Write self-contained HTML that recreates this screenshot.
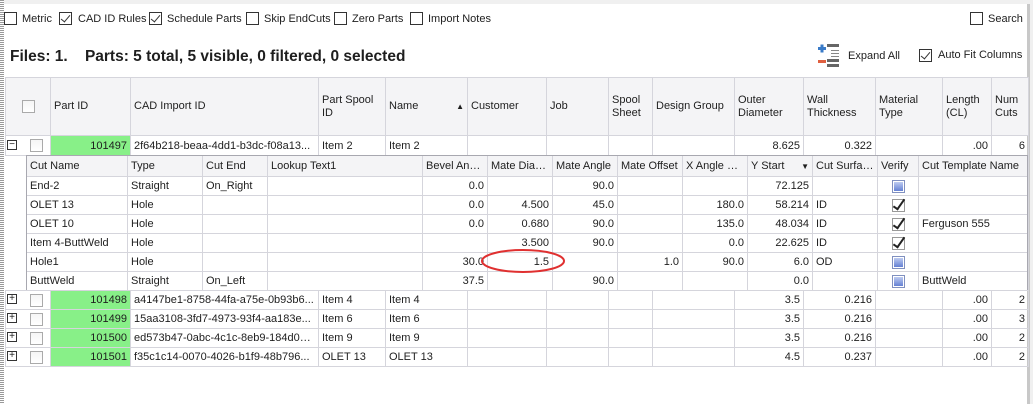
<!DOCTYPE html>
<html><head><meta charset="utf-8"><style>
*{box-sizing:border-box;margin:0;padding:0}
body{width:1033px;height:404px;background:#fff;font-family:"Liberation Sans",sans-serif;font-size:11px;color:#1e1e1e;position:relative;overflow:hidden}
.topband{position:absolute;left:0;top:0;width:1033px;height:4px;background:#f0f0f0}
.ldots{position:absolute;left:0;top:0;width:4px;height:404px;background:repeating-linear-gradient(#999 0 1px,#fff 1px 2px)}
.rline{position:absolute;left:1027px;top:4px;width:3px;height:400px;background:#c8c8c8}
.rgray{position:absolute;left:1030px;top:0;width:3px;height:404px;background:#f0f0f0}
.cb{position:absolute;width:13px;height:13px;border:1px solid #333;background:#fff}
.lbl{position:absolute;font-size:11px;white-space:nowrap}
.ck::after{content:"";position:absolute;left:3px;top:0px;width:4px;height:8px;border:solid #333;border-width:0 1.5px 1.5px 0;transform:rotate(40deg)}
table{position:absolute;border-collapse:collapse;table-layout:fixed}
td{border:1px solid #d5d5dc;padding:0 3px;white-space:nowrap;overflow:hidden;text-overflow:ellipsis;height:19px}
.r{text-align:right}
.hd td{background:#f4f4f6;vertical-align:middle;line-height:13px}
.g{background:#88f088}
.sq{display:inline-block;width:13px;height:13px;border:1px solid #aaa;background:linear-gradient(#f5f5f5,#fff);vertical-align:middle}
.pm{position:absolute;width:10px;height:10px;border:1px solid #333;background:#fff;font-size:10px;line-height:8px;text-align:center}
.vb{display:inline-block;width:13px;height:13px;border:1px solid #8090c0;background:linear-gradient(#c8d4f4,#5a78d0);box-shadow:inset 0 0 0 1px #fff;vertical-align:middle}
.vc{display:inline-block;width:13px;height:13px;border:1px solid #999;background:#fff;position:relative;vertical-align:middle}
.vc::after{content:"";position:absolute;left:3px;top:-3px;width:4px;height:11px;border:solid #222;border-width:0 2px 2px 0;transform:rotate(35deg)}
</style></head><body>
<div class="topband"></div><div class="ldots"></div><div class="rline"></div><div class="rgray"></div>

<div class="cb" style="left:4px;top:12px"></div><div class="lbl" style="left:22px;top:13px">Metric</div>
<div class="cb ck" style="left:59px;top:12px"></div><div class="lbl" style="left:78px;top:13px">CAD ID Rules</div>
<div class="cb ck" style="left:149px;top:12px"></div><div class="lbl" style="left:167px;top:13px">Schedule Parts</div>
<div class="cb" style="left:246px;top:12px"></div><div class="lbl" style="left:264px;top:13px">Skip EndCuts</div>
<div class="cb" style="left:334px;top:12px"></div><div class="lbl" style="left:352px;top:13px">Zero Parts</div>
<div class="cb" style="left:410px;top:12px"></div><div class="lbl" style="left:428px;top:13px">Import Notes</div>
<div class="cb" style="left:970px;top:12px"></div><div class="lbl" style="left:988px;top:13px">Search</div>

<div class="lbl" style="left:10px;top:48px;font-size:15.5px;font-weight:bold">Files: 1.&nbsp;&nbsp;&nbsp; Parts: 5 total, 5 visible, 0 filtered, 0 selected</div>

<svg style="position:absolute;left:816px;top:43px" width="28" height="25"><rect x="2" y="4" width="8" height="3" fill="#3a7bc8"/><rect x="4.5" y="1.5" width="3" height="8" fill="#3a7bc8"/><rect x="2" y="17" width="8" height="3" fill="#e06040"/><rect x="11" y="1" width="12" height="3" fill="#666"/><rect x="15" y="7" width="8" height="1" fill="#888"/><rect x="15" y="10" width="8" height="1" fill="#888"/><rect x="15" y="13" width="8" height="1" fill="#888"/><rect x="11" y="16" width="12" height="3" fill="#666"/><rect x="11" y="21" width="12" height="3" fill="#666"/></svg>
<div class="lbl" style="left:848px;top:50px">Expand All</div>
<div class="cb ck" style="left:919px;top:49px"></div><div class="lbl" style="left:938px;top:49px">Auto Fit Columns</div>

<table style="left:5px;top:77px;width:1023px">
<colgroup><col style="width:45px"><col style="width:80px"><col style="width:188px"><col style="width:67px"><col style="width:82px"><col style="width:79px"><col style="width:62px"><col style="width:44px"><col style="width:82px"><col style="width:69px"><col style="width:72px"><col style="width:67px"><col style="width:49px"><col style="width:37px"></colgroup>
<tr class="hd" style="height:58px"><td style="text-align:center"><span class="sq"></span></td><td>Part ID</td><td>CAD Import ID</td><td style="white-space:normal">Part Spool ID</td><td>Name <span style="float:right;font-size:8px">▲</span></td><td>Customer</td><td>Job</td><td style="white-space:normal">Spool Sheet</td><td>Design Group</td><td style="white-space:normal">Outer Diameter</td><td style="white-space:normal">Wall Thickness</td><td style="white-space:normal">Material Type</td><td style="white-space:normal">Length (CL)</td><td style="white-space:normal">Num Cuts</td></tr>
<tr style="height:20px"><td style="padding-left:24px"><span class="sq"></span></td><td class="r g">101497</td><td>2f64b218-beaa-4dd1-b3dc-f08a13...</td><td>Item 2</td><td>Item 2</td><td></td><td></td><td></td><td></td><td class="r">8.625</td><td class="r">0.322</td><td></td><td class="r">.00</td><td class="r">6</td></tr>
</table>
<div class="pm" style="left:7px;top:140px">−</div>

<table style="left:26px;top:155px;width:1002px">
<colgroup><col style="width:101px"><col style="width:75px"><col style="width:65px"><col style="width:155px"><col style="width:65px"><col style="width:65px"><col style="width:65px"><col style="width:65px"><col style="width:65px"><col style="width:65px"><col style="width:65px"><col style="width:41px"><col style="width:110px"></colgroup>
<tr class="hd" style="height:21px"><td>Cut Name</td><td>Type</td><td>Cut End</td><td>Lookup Text1</td><td>Bevel Angle</td><td>Mate Diameter</td><td>Mate Angle</td><td>Mate Offset</td><td>X Angle Start</td><td>Y Start <span style="float:right;font-size:8px">▼</span></td><td>Cut Surface</td><td>Verify</td><td>Cut Template Name</td></tr>
<tr><td>End-2</td><td>Straight</td><td>On_Right</td><td></td><td class="r">0.0</td><td></td><td class="r">90.0</td><td></td><td></td><td class="r">72.125</td><td></td><td style="text-align:center"><span class="vb"></span></td><td></td></tr>
<tr><td>OLET 13</td><td>Hole</td><td></td><td></td><td class="r">0.0</td><td class="r">4.500</td><td class="r">45.0</td><td></td><td class="r">180.0</td><td class="r">58.214</td><td>ID</td><td style="text-align:center"><span class="vc"></span></td><td></td></tr>
<tr><td>OLET 10</td><td>Hole</td><td></td><td></td><td class="r">0.0</td><td class="r">0.680</td><td class="r">90.0</td><td></td><td class="r">135.0</td><td class="r">48.034</td><td>ID</td><td style="text-align:center"><span class="vc"></span></td><td>Ferguson 555</td></tr>
<tr><td>Item 4-ButtWeld</td><td>Hole</td><td></td><td></td><td></td><td class="r">3.500</td><td class="r">90.0</td><td></td><td class="r">0.0</td><td class="r">22.625</td><td>ID</td><td style="text-align:center"><span class="vc"></span></td><td></td></tr>
<tr><td>Hole1</td><td>Hole</td><td></td><td></td><td class="r">30.0</td><td class="r">1.5</td><td></td><td class="r">1.0</td><td class="r">90.0</td><td class="r">6.0</td><td>OD</td><td style="text-align:center"><span class="vb"></span></td><td></td></tr>
<tr><td>ButtWeld</td><td>Straight</td><td>On_Left</td><td></td><td class="r">37.5</td><td></td><td class="r">90.0</td><td></td><td></td><td class="r">0.0</td><td></td><td style="text-align:center"><span class="vb"></span></td><td>ButtWeld</td></tr>
</table>
<div style="position:absolute;left:26px;top:155px;width:1002px;height:136px;border:1px solid #a8a8b0;pointer-events:none"></div>

<table style="left:5px;top:290px;width:1023px">
<colgroup><col style="width:45px"><col style="width:80px"><col style="width:188px"><col style="width:67px"><col style="width:82px"><col style="width:79px"><col style="width:62px"><col style="width:44px"><col style="width:82px"><col style="width:69px"><col style="width:72px"><col style="width:67px"><col style="width:49px"><col style="width:37px"></colgroup>
<tr><td style="padding-left:24px"><span class="sq"></span></td><td class="r g">101498</td><td>a4147be1-8758-44fa-a75e-0b93b6...</td><td>Item 4</td><td>Item 4</td><td></td><td></td><td></td><td></td><td class="r">3.5</td><td class="r">0.216</td><td></td><td class="r">.00</td><td class="r">2</td></tr>
<tr><td style="padding-left:24px"><span class="sq"></span></td><td class="r g">101499</td><td>15aa3108-3fd7-4973-93f4-aa183e...</td><td>Item 6</td><td>Item 6</td><td></td><td></td><td></td><td></td><td class="r">3.5</td><td class="r">0.216</td><td></td><td class="r">.00</td><td class="r">3</td></tr>
<tr><td style="padding-left:24px"><span class="sq"></span></td><td class="r g">101500</td><td>ed573b47-0abc-4c1c-8eb9-184d0b...</td><td>Item 9</td><td>Item 9</td><td></td><td></td><td></td><td></td><td class="r">3.5</td><td class="r">0.216</td><td></td><td class="r">.00</td><td class="r">2</td></tr>
<tr><td style="padding-left:24px"><span class="sq"></span></td><td class="r g">101501</td><td>f35c1c14-0070-4026-b1f9-48b796...</td><td>OLET 13</td><td>OLET 13</td><td></td><td></td><td></td><td></td><td class="r">4.5</td><td class="r">0.237</td><td></td><td class="r">.00</td><td class="r">2</td></tr>
</table>
<div class="pm" style="left:7px;top:294px">+</div>
<div class="pm" style="left:7px;top:313px">+</div>
<div class="pm" style="left:7px;top:332px">+</div>
<div class="pm" style="left:7px;top:351px">+</div>

<svg style="position:absolute;left:480px;top:248px" width="90" height="26"><ellipse cx="43" cy="13" rx="41" ry="11" fill="none" stroke="#e03030" stroke-width="2"/></svg>
</body></html>
